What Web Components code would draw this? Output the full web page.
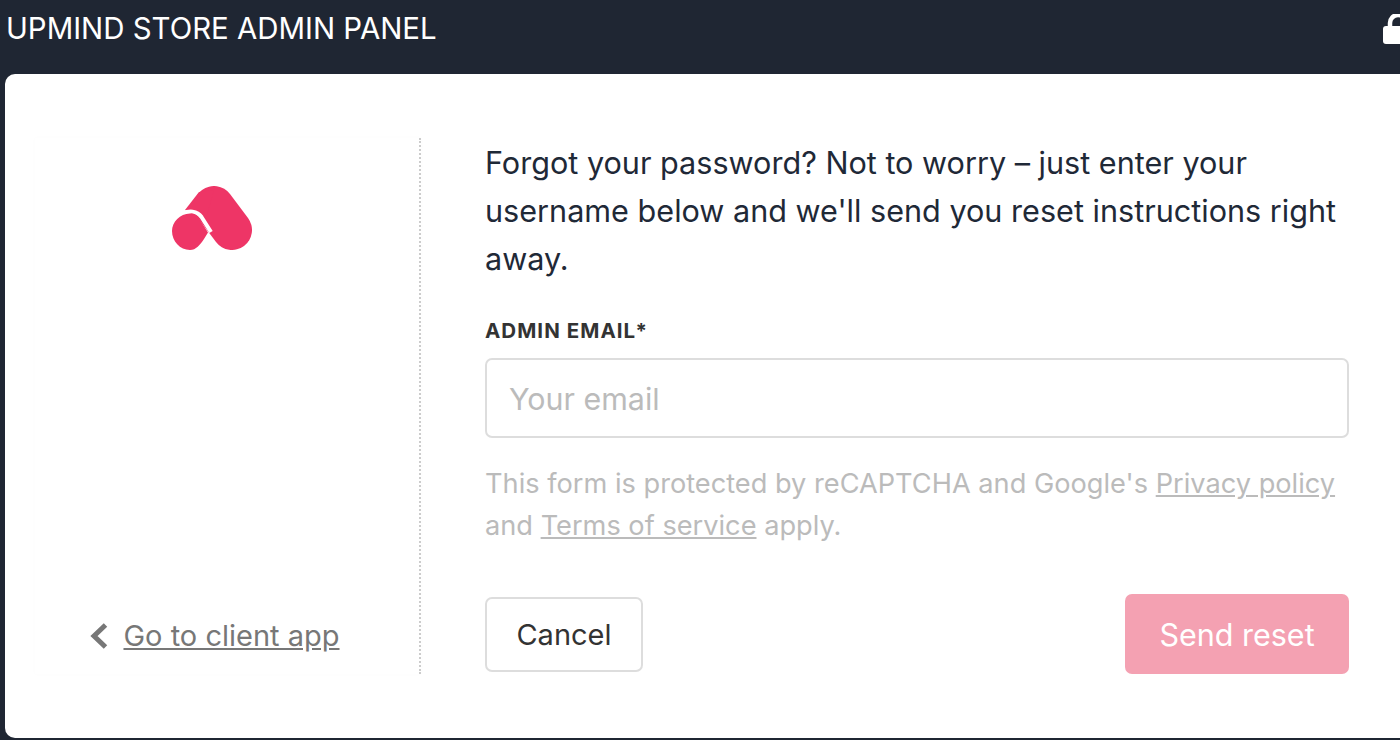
<!DOCTYPE html>
<html lang="en">
<head>
<meta charset="utf-8">
<title>Upmind store admin panel</title>
<style>
  html, body { margin: 0; height: 100%; overflow: hidden; background: #000; }
  body { font-family: Inter, "Liberation Sans", sans-serif; }
</style>
</head>
<body>
<admin-page>
  <admin-bar slot="bar">UPMIND STORE ADMIN PANEL</admin-bar>
  <side-panel slot="side"></side-panel>
  <reset-form slot="main"></reset-form>
</admin-page>

<script>
class AdminPage extends HTMLElement {
  constructor() {
    super();
    this.attachShadow({ mode: 'open' });
    this.shadowRoot.innerHTML = `
      <style>
        :host { display: flex; flex-direction: column; height: 740px; background: #1f2633; }
        .card {
          flex: 1;
          margin-left: 5px;
          margin-bottom: 2px;
          background: #fff;
          border-radius: 10px 0 0 10px;
          padding: 64px 51px 64px 30px;
          display: flex;
          min-height: 0;
        }
        ::slotted([slot=side]) { width: 386px; flex: none; }
        ::slotted([slot=main]) { flex: 1; margin-left: 64px; min-width: 0; }
      </style>
      <slot name="bar"></slot>
      <div class="card">
        <slot name="side"></slot>
        <slot name="main"></slot>
      </div>
    `;
  }
}

class AdminBar extends HTMLElement {
  constructor() {
    super();
    this.attachShadow({ mode: 'open' });
    this.shadowRoot.innerHTML = `
      <style>
        :host {
          display: flex;
          justify-content: space-between;
          height: 74px;
          flex: none;
          overflow: hidden;
          background: #1f2633;
          color: #fff;
          font-size: 29.4px;
          line-height: 57px;
          padding-left: 6px;
        }
        svg { flex: none; margin: 14px -22px 0 0; width: 39px; height: 30px; }
      </style>
      <span><slot></slot></span>
      <svg viewBox="0 0 39 30" aria-hidden="true">
        <path d="M7 13V9a8 8 0 0 1 16 0" fill="none" stroke="#fff" stroke-width="4.5"/>
        <rect x="0" y="12" width="39" height="18" rx="3" fill="#fff"/>
      </svg>
    `;
  }
}

class SidePanel extends HTMLElement {
  constructor() {
    super();
    this.attachShadow({ mode: 'open' });
    this.shadowRoot.innerHTML = `
      <style>
        :host {
          display: flex;
          flex-direction: column;
          align-items: center;
          justify-content: space-between;
          box-sizing: border-box;
          padding-right: 30px;
          border-right: 2px dotted #ccc;
          box-shadow: 0 0 6px rgba(0,0,0,.015);
          color: #777;
        }
        svg.logo { display: block; width: 80px; height: 64px; margin-top: 48px; }
        a { color: inherit; text-decoration: underline; font-size: 29px; line-height: 36px; }
        .back { display: flex; align-items: center; gap: 15px; margin: 0 0 20px 6px; }
        .back svg { width: 18px; height: 26px; flex: none; }
      </style>
      <svg class="logo" viewBox="172 186 80 64" aria-hidden="true">
        <path d="M214 206L232 230" fill="none" stroke="#ee3566" stroke-width="40" stroke-linecap="round"/>
        <path d="M199 192L185 210L205 222L214 190Z" fill="#ee3566"/>
        <path d="M182 213.500C189 210.500 197 210.500 201.500 217L211 232" fill="none" stroke="#fff" stroke-width="4"/>
        <path d="M172 231C172 222 180 213.500 190 213.500C194 213.500 197 215 199.500 219L208 232.500L204 239C200 245 196 250 190 250C180 250 172 241 172 231Z" fill="#ee3566"/>
      </svg>
      <div class="back">
        <svg viewBox="0 0 18 26" aria-hidden="true"><path d="M15.500 2L4 13l11.500 11" fill="none" stroke="#777" stroke-width="5"/></svg>
        <a href="#">Go to client app</a>
      </div>
    `;
  }
}

class TextField extends HTMLElement {
  constructor() {
    super();
    this.attachShadow({ mode: 'open' });
    this.shadowRoot.innerHTML = `
      <style>
        :host { display: block; }
        label {
          display: block;
          font-size: 20.5px;
          font-weight: 700;
          letter-spacing: 1.05px;
          line-height: 24px;
          color: #333;
          margin-bottom: 15px;
        }
        input {
          display: block;
          box-sizing: border-box;
          width: 100%;
          height: 80px;
          padding: 2px 22px 0;
          border: 2px solid #ddd;
          border-radius: 7px;
          background: #fff;
          font: inherit;
          font-size: 30.4px;
          outline: none;
        }
        input::placeholder { color: #bbb; opacity: 1; }
      </style>
      <label for="f"><slot></slot></label>
      <input id="f" type="email">
    `;
  }
  connectedCallback() {
    this.shadowRoot.getElementById('f').placeholder = this.getAttribute('placeholder') || '';
  }
}

class UiButton extends HTMLElement {
  constructor() {
    super();
    this.attachShadow({ mode: 'open' });
    this.shadowRoot.innerHTML = `
      <style>
        :host {
          display: flex;
          align-items: center;
          justify-content: center;
          box-sizing: border-box;
          border-radius: 7px;
          cursor: pointer;
        }
        :host([variant=ghost]) { width: 158px; height: 75px; border: 2px solid #ddd; color: #333; background: #fff; margin-top: 3px; font-size: 29px; }
        :host([variant=primary]) { width: 224px; height: 80px; color: #fff; background: #f4a1b2; font-size: 30.5px; }
      </style>
      <slot></slot>
    `;
  }
}

class ResetForm extends HTMLElement {
  constructor() {
    super();
    this.attachShadow({ mode: 'open' });
    this.shadowRoot.innerHTML = `
      <style>
        :host { display: flex; flex-direction: column; }
        p { margin: 0; }
        .intro { font-size: 30.6px; line-height: 48px; color: #1f2937; margin-top: 1px; margin-bottom: 36px; }
        .note { font-size: 27.2px; line-height: 42px; color: #bbb; margin-top: 25px; }
        .note a { color: inherit; }
        .actions { display: flex; justify-content: space-between; align-items: flex-start; margin-top: auto; }
      </style>
      <p class="intro">Forgot your password? Not to worry – just enter your username below and we'll send you reset instructions right away.</p>
      <text-field placeholder="Your email">ADMIN EMAIL*</text-field>
      <p class="note">This form is protected by reCAPTCHA and Google's <a href="#">Privacy policy</a> and <a href="#">Terms of service</a> apply.</p>
      <div class="actions">
        <ui-button variant="ghost">Cancel</ui-button>
        <ui-button variant="primary">Send reset</ui-button>
      </div>
    `;
  }
}

customElements.define('admin-page', AdminPage);
customElements.define('admin-bar', AdminBar);
customElements.define('side-panel', SidePanel);
customElements.define('text-field', TextField);
customElements.define('ui-button', UiButton);
customElements.define('reset-form', ResetForm);
</script>
</body>
</html>
